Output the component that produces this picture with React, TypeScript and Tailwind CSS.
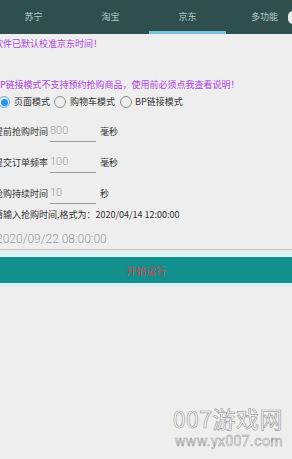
import React from 'react'

const tabs = ['苏宁', '淘宝', '京东', '多功能']

function Radio({ checked }: { checked?: boolean }) {
  return (
    <span
      className={
        checked
          ? 'w-[12px] h-[12px] rounded-full border-[1.5px] border-[#5aaef0] flex items-center justify-center shrink-0'
          : 'block w-[12px] h-[12px] rounded-full border-[1.5px] border-[#8e8e8e] shrink-0'
      }
    >
      {checked && <span className="block w-[7px] h-[7px] rounded-full bg-[#2196f3]" />}
    </span>
  )
}

function Field({ label, value, unit }: { label: string; value: string; unit: string }) {
  return (
    <div className="h-[31px] flex items-center">
      <span className="w-[56px] text-[9px] leading-[12px] text-[#333]">{label}</span>
      <div className="w-[46px] h-[20px] border-b border-[#9a9a9a] flex items-center">
        <span className="font-['Roboto',sans-serif] font-light text-[11px] text-[#a0a0a0] leading-[14px]">{value}</span>
      </div>
      <span className="ml-[4px] text-[9px] leading-[12px] text-[#333]">{unit}</span>
    </div>
  )
}

export default function App() {
  return (
    <div className="relative w-[292px] min-h-[459px] bg-[#eeeeee] overflow-hidden font-['Noto_Sans_CJK_SC',sans-serif]">
      {/* tab bar */}
      <div className="relative h-[34px] bg-[#2f4f4e] flex">
        <div className="flex -ml-[5px]">
          {tabs.map((t, i) => (
            <div
              key={t}
              className={
                i === 2
                  ? 'w-[77px] h-[34px] flex items-center justify-center border-b-[3px] border-[#74c4de] pt-[3px]'
                  : 'w-[77px] h-[34px] flex items-center justify-center'
              }
            >
              <span className="text-[9px] text-[#b6c9c8]">{t}</span>
            </div>
          ))}
        </div>
        <span className="absolute left-[288px] top-[11px] w-[10px] h-[13px] rounded-full bg-[#e6eeee]" />
      </div>

      <div className="-ml-[6px] w-[298px] flex flex-col">
        <p className="mt-[3px] text-[9px] leading-[14px] text-[#b040e0]">软件已默认校准京东时间！</p>
        <p className="mt-[27px] text-[9px] leading-[14px] text-[#b040e0]">
          BP链接模式不支持预约抢购商品，使用前必须点我查看说明！
        </p>

        <div className="mt-[3px] h-[14px] flex items-center text-[9px] text-[#333]">
          <span className="ml-[4px]">
            <Radio checked />
          </span>
          <span className="ml-[4px]">页面模式</span>
          <span className="ml-[4px]">
            <Radio />
          </span>
          <span className="ml-[4px]">购物车模式</span>
          <span className="ml-[5px]">
            <Radio />
          </span>
          <span className="ml-[3px]">BP链接模式</span>
        </div>

        <div className="mt-[7px] flex flex-col">
          <Field label="提前抢购时间" value="800" unit="毫秒" />
          <Field label="提交订单频率" value="100" unit="毫秒" />
          <Field label="抢购持续时间" value="10" unit="秒" />
        </div>

        <p className="text-[9px] leading-[12px] text-[#333]">请输入抢购时间,格式为：2020/04/14 12:00:00</p>

        <div className="h-[29px] flex items-end pb-[3px] border-b border-[#c4c4c4]">
          <span className="ml-[2px] font-['Roboto',sans-serif] font-light text-[12px] leading-[14px] text-[#9a9a9a]">
            2020/09/22 08:00:00
          </span>
        </div>

        <div className="mt-[1px] bg-[#dcf1f1] pt-[6px] pb-[4px]">
          <div className="h-[26px] bg-[#12908d] flex items-center justify-center">
            <span className="ml-[6px] text-[10px] text-[#cc4650]">开始运行</span>
          </div>
        </div>
      </div>

      {/* watermark */}
      <div className="absolute right-[9px] top-[407px] flex flex-col items-end whitespace-nowrap pointer-events-none">
        <span className="text-[23px] leading-[23px] text-white [-webkit-text-stroke:0.7px_#a0a0a0] tracking-[0.5px]">
          007游戏网
        </span>
        <span className="mt-[4px] font-['Roboto',sans-serif] text-[14px] leading-[14px] text-white [-webkit-text-stroke:0.6px_#a0a0a0] tracking-[0.4px]">
          www.yx007.com
        </span>
      </div>
    </div>
  )
}
